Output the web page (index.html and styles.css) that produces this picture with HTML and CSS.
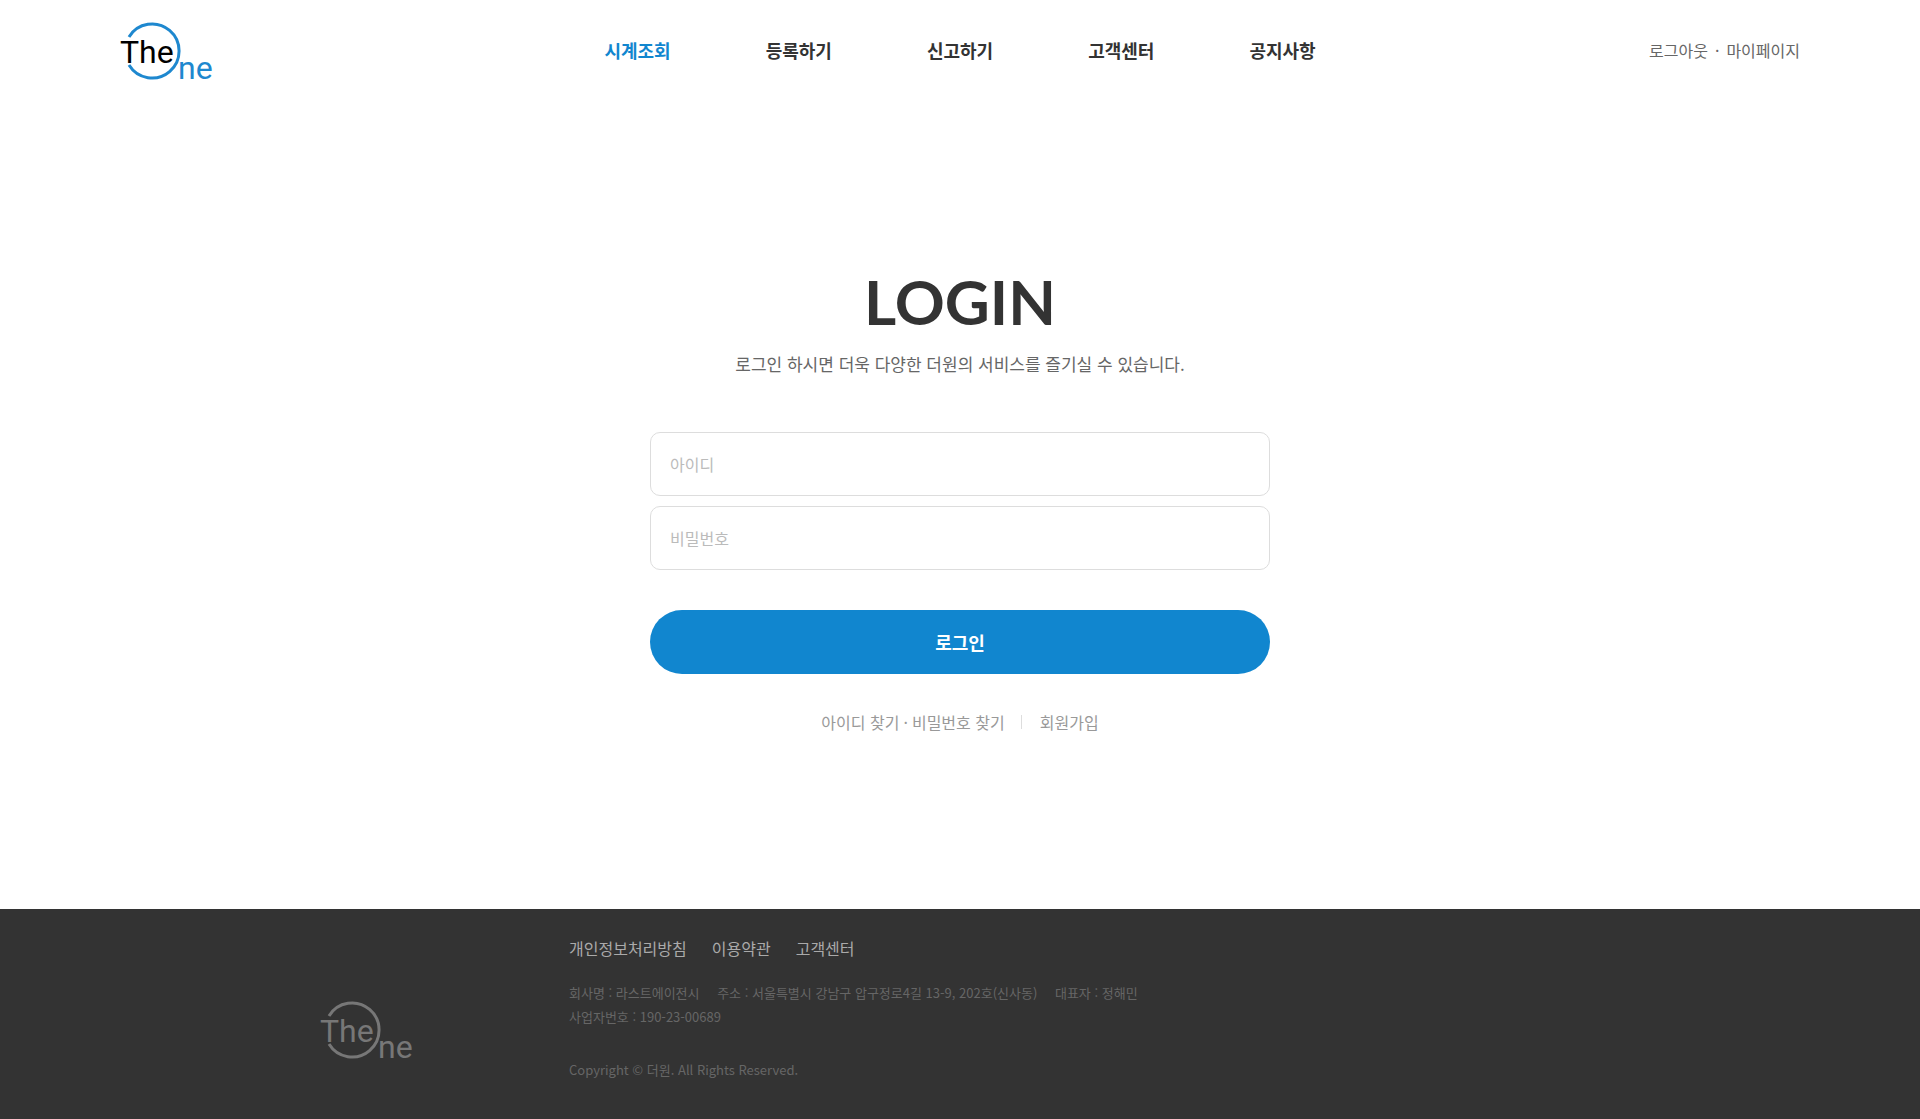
FILE: index.html
```html
<!DOCTYPE html>
<html lang="ko">

<head>
    <meta charset="UTF-8">
    <meta name="viewport" content="width=device-width, initial-scale=1.0">
    <title>더원 - 로그인</title>
    <link rel="stylesheet" href="styles.css">
</head>

<body>
    <header class="header">
        <a href="#" class="logo" aria-label="The One">
            <svg width="100" height="80" viewBox="0 0 100 80">
                <path class="ring" d="M9 27 A27 27 0 1 1 9 55" />
                <text class="the" x="0" y="53">The</text>
                <text class="ne" x="58" y="69">ne</text>
            </svg>
        </a>
        <nav class="gnb">
            <a href="#" class="on">시계조회</a>
            <a href="#">등록하기</a>
            <a href="#">신고하기</a>
            <a href="#">고객센터</a>
            <a href="#">공지사항</a>
        </nav>
        <div class="util">
            <a href="#">로그아웃</a>
            <span>·</span>
            <a href="#">마이페이지</a>
        </div>
    </header>

    <main class="login">
        <h1>LOGIN</h1>
        <p class="description">로그인 하시면 더욱 다양한 더원의 서비스를 즐기실 수 있습니다.</p>
        <form id="loginForm">
            <input type="text" id="userId" placeholder="아이디" aria-label="아이디">
            <input type="password" id="userPw" placeholder="비밀번호" aria-label="비밀번호">
            <button type="submit">로그인</button>
        </form>
        <div class="links">
            <div class="find">
                <a href="#">아이디 찾기</a>
                <span>·</span>
                <a href="#">비밀번호 찾기</a>
            </div>
            <a href="#" class="join">회원가입</a>
        </div>
    </main>

    <footer class="footer">
        <a href="#" class="logo logo-gray" aria-label="The One">
            <svg width="100" height="80" viewBox="0 0 100 80">
                <path class="ring" d="M9 27 A27 27 0 1 1 9 55" />
                <text class="the" x="0" y="53">The</text>
                <text class="ne" x="58" y="69">ne</text>
            </svg>
        </a>
        <div class="info">
            <div class="policy">
                <a href="#">개인정보처리방침</a>
                <a href="#">이용약관</a>
                <a href="#">고객센터</a>
            </div>
            <address>
                <span>회사명 : 라스트에이전시</span>
                <span>주소 : 서울특별시 강남구 압구정로4길 13-9, 202호(신사동)</span>
                <span>대표자 : 정해민</span>
                <br>
                <span>사업자번호 : 190-23-00689</span>
            </address>
            <p class="copy">Copyright © 더원. All Rights Reserved.</p>
        </div>
    </footer>
</body>

</html>
```
FILE: styles.css
```css
* {
    box-sizing: border-box;
}

body {
    display: flex;
    flex-direction: column;
    min-height: 100vh;
    margin: 0;
    font-family: "Noto Sans CJK KR", sans-serif;
    font-size: 16px;
    color: #333;
    background-color: #fff;
}

a {
    color: inherit;
    text-decoration: none;
}

/* header */
.header {
    display: grid;
    grid-template-columns: 1fr auto 1fr;
    align-items: center;
    height: 100px;
    padding: 0 120px;
}

.logo svg {
    display: block;
}

.logo .ring {
    fill: none;
    stroke: #1e88cf;
    stroke-width: 3px;
}

.logo text {
    font-family: Roboto, sans-serif;
    font-size: 32px;
    stroke-width: 0;
}

.logo .the {
    fill: #000;
}

.logo .ne {
    fill: #1e88cf;
}

.gnb {
    display: flex;
    gap: 95px;
    font-size: 18px;
    font-weight: 700;
}

.gnb .on {
    color: #1186cf;
}

.util {
    display: flex;
    justify-content: flex-end;
    gap: 7px;
    font-size: 16px;
    color: #666;
}

/* login */
.login {
    flex: 1;
    width: 620px;
    margin: 0 auto;
    padding-top: 164px;
    text-align: center;
}

.login h1 {
    margin: 0;
    font-family: Lato, sans-serif;
    font-size: 62px;
    font-weight: 700;
    line-height: 74px;
}

.description {
    margin: 10px 0 52px;
    font-size: 17px;
    line-height: 32px;
    color: #666;
}

form {
    display: flex;
    flex-direction: column;
    gap: 10px;
}

form input {
    height: 64px;
    padding: 0 19px;
    border: 1px solid #ddd;
    border-radius: 10px;
    font-family: inherit;
    font-size: 16px;
}

form input::placeholder {
    color: #bbb;
}

form button {
    height: 64px;
    margin-top: 30px;
    border: none;
    border-radius: 32px;
    background-color: #1186cf;
    font-family: inherit;
    font-size: 18px;
    font-weight: 700;
    color: #fff;
    cursor: pointer;
}

.links {
    display: flex;
    justify-content: center;
    align-items: center;
    margin-top: 36px;
    line-height: 24px;
    color: #999;
}

.find {
    display: flex;
    gap: 4px;
}

.join {
    display: flex;
    align-items: center;
}

.join::before {
    content: "";
    height: 14px;
    margin: 0 18px 0 16px;
    border-left: 1px solid #ddd;
}

/* footer */
.footer {
    display: flex;
    gap: 149px;
    height: 210px;
    padding: 26px 320px 0;
    background-color: #333;
    color: #666;
}

.footer .logo {
    margin-top: 54px;
}

.logo-gray .ring {
    stroke: #777;
}

.logo-gray .the,
.logo-gray .ne {
    fill: #777;
}

.policy {
    display: flex;
    gap: 25px;
    line-height: 26px;
    color: #aaa;
}

address {
    margin-top: 20px;
    font-size: 13px;
    font-style: normal;
    line-height: 24px;
}

address span {
    margin-right: 14px;
}

.copy {
    margin: 29px 0 0;
    font-size: 13px;
    line-height: 24px;
}
```
